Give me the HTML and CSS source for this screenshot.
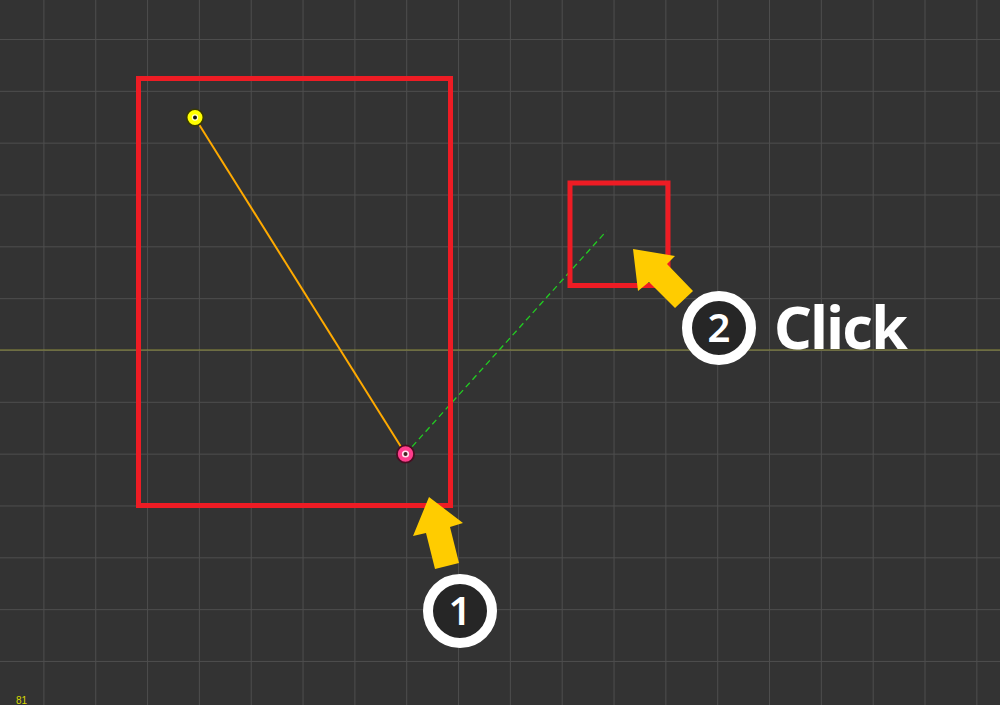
FILE: index.html
```html
<!DOCTYPE html>
<html>
<head>
<meta charset="utf-8">
<link rel="stylesheet" href="styles.css">
</head>
<body>
<div class="canvas">
  <svg class="scene" width="1000" height="705" viewBox="0 0 1000 705">
    <defs>
      <pattern id="grid" patternUnits="userSpaceOnUse" x="43.4" y="39" width="51.83" height="51.83">
        <path class="grid-line" d="M0.5 0 V51.83 M0 0.5 H51.83"/>
      </pattern>
    </defs>
    <rect class="bg" x="0" y="0" width="1000" height="705"/>
    <rect x="0" y="0" width="1000" height="705" fill="url(#grid)"/>
    <line class="axis" x1="0" y1="350" x2="1000" y2="350"/>

    <line class="seg" x1="195" y1="118" x2="405.5" y2="454"/>
    <line class="dash" x1="405.5" y1="454" x2="606.5" y2="231"/>

    <rect class="frame" x="138.5" y="78.5" width="312" height="427"/>
    <rect class="frame" x="570" y="183" width="98" height="102.5"/>

    <circle class="pt-yellow" cx="195" cy="117.5" r="8.3"/>
    <circle class="pt-yellow-ring" cx="195" cy="117.5" r="3.2"/>
    <circle class="pt-yellow-dot" cx="195" cy="117.5" r="2"/>

    <circle class="pt-pink" cx="405.5" cy="454" r="8.6"/>
    <circle class="pt-pink-ring" cx="405.5" cy="454" r="3.6"/>
    <circle class="pt-pink-dot" cx="405.5" cy="454" r="2"/>

    <polygon class="arrow" points="429,497 463,523 450,527 459,563 435,569 426,533 413,536"/>
    <polygon class="arrow" points="633,249 675,256 667,264 693,291 675,308 649,282 638,291"/>

    <text class="coord" x="16" y="704">81</text>
  </svg>

  <div class="badge badge-one"><span>1</span></div>
  <div class="badge badge-two"><span>2</span></div>
  <div class="label-click">Click</div>
</div>
</body>
</html>
```

FILE: styles.css
```css
html, body {
  margin: 0;
  padding: 0;
  background: #333333;
  overflow: hidden;
}

.canvas {
  position: relative;
  width: 1000px;
  height: 705px;
  overflow: hidden;
  font-family: "Noto Sans", "Open Sans", sans-serif;
}

.scene {
  display: block;
}

.bg {
  fill: #333333;
}

.grid-line {
  stroke: #4d4d4d;
  stroke-width: 1;
  fill: none;
}

.axis {
  stroke: #8f8f3c;
  stroke-width: 1;
}

.seg {
  stroke: #ffaa00;
  stroke-width: 2;
}

.dash {
  stroke: #22cc22;
  stroke-width: 1.3;
  stroke-dasharray: 6 4;
}

.frame {
  fill: none;
  stroke: #ee1c24;
  stroke-width: 5;
}

.pt-yellow {
  fill: #ffff00;
  stroke: #3a3a00;
  stroke-width: 1.6;
}

.pt-yellow-ring {
  fill: #ffffcc;
}

.pt-yellow-dot {
  fill: #111111;
}

.pt-pink {
  fill: #ff3c8c;
  stroke: #4a0d22;
  stroke-width: 1.8;
}

.pt-pink-ring {
  fill: #ffe0ee;
}

.pt-pink-dot {
  fill: #442222;
}

.arrow {
  fill: #ffcc00;
}

.coord {
  fill: #d8d800;
  font-family: "Liberation Sans", Arial, sans-serif;
  font-size: 10px;
}

.badge {
  position: absolute;
  width: 54px;
  height: 54px;
  border: 10px solid #ffffff;
  border-radius: 50%;
  background: #262626;
  display: flex;
  align-items: center;
  justify-content: center;
  color: #ffffff;
  font-weight: 600;
  font-size: 40px;
  line-height: 1;
}

.badge span {
  display: block;
  margin-top: -3px;
}

.badge-one {
  left: 423px;
  top: 574px;
}

.badge-two {
  left: 682px;
  top: 291px;
}

.label-click {
  position: absolute;
  left: 774px;
  top: 286px;
  color: #ffffff;
  font-weight: 700;
  font-size: 59px;
  line-height: 80px;
  letter-spacing: -1.6px;
}
```
